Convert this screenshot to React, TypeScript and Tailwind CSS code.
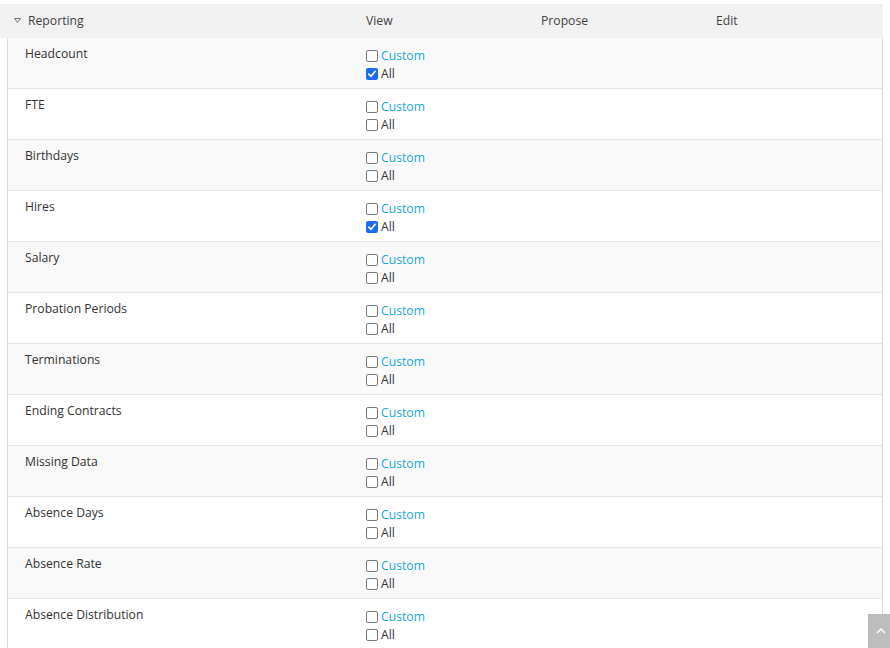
import React from "react";

const rows: { name: string; all: boolean }[] = [
  { name: "Headcount", all: true },
  { name: "FTE", all: false },
  { name: "Birthdays", all: false },
  { name: "Hires", all: true },
  { name: "Salary", all: false },
  { name: "Probation Periods", all: false },
  { name: "Terminations", all: false },
  { name: "Ending Contracts", all: false },
  { name: "Missing Data", all: false },
  { name: "Absence Days", all: false },
  { name: "Absence Rate", all: false },
  { name: "Absence Distribution", all: false },
];

function Box({ checked }: { checked: boolean }) {
  if (checked) {
    return (
      <span className="inline-flex w-[12px] h-[12px] rounded-[2px] bg-[#1a6df0] items-center justify-center mr-[3px] shrink-0">
        <svg viewBox="0 0 12 12" className="w-[10px] h-[10px]">
          <path d="M2.2 6.2 L4.8 8.8 L9.8 2.8" fill="none" stroke="white" strokeWidth="2" strokeLinecap="round" strokeLinejoin="round" />
        </svg>
      </span>
    );
  }
  return (
    <span className="inline-block w-[12px] h-[12px] rounded-[2px] border border-[#7a7a7a] bg-white mr-[3px] shrink-0" />
  );
}

export default function App() {
  return (
    <div
      className="relative w-[890px] h-[648px] overflow-hidden bg-white text-[12.2px] text-[#333]"
      style={{ fontFamily: '"Open Sans", "Noto Sans", sans-serif' }}
    >
      <div className="mt-[4px] w-[883px]">
        {/* header */}
        <div className="flex h-[34px] items-center bg-[#f1f1f1] text-[#444]">
          <div className="w-[366px] flex items-center pl-[14px]">
            <svg viewBox="0 0 8 6" className="w-[7px] h-[5px] mr-[7px]">
              <path d="M0.6 0.6 L7.4 0.6 L4 5.4 Z" fill="none" stroke="#555" strokeWidth="1" strokeLinejoin="round" />
            </svg>
            <span>Reporting</span>
          </div>
          <div className="w-[175px]">View</div>
          <div className="w-[175px]">Propose</div>
          <div className="flex-1">Edit</div>
        </div>

        {/* body */}
        <div className="ml-[7px] border-x border-[#dcdcdc]">
          {rows.map((r, i) => (
            <div
              key={r.name}
              className={`flex h-[51px] border-b border-[#e6e6e6] ${i % 2 === 0 ? "bg-[#f9f9f9]" : "bg-white"}`}
            >
              <div className="w-[358px] pl-[17px] pt-[7px] leading-[18px]">{r.name}</div>
              <div className="w-[175px] pt-[9px] leading-[18px]">
                <div className="flex items-center">
                  <Box checked={false} />
                  <span className="text-[#1ba8d5]">Custom</span>
                </div>
                <div className="flex items-center">
                  <Box checked={r.all} />
                  <span>All</span>
                </div>
              </div>
              <div className="w-[175px]" />
              <div className="flex-1" />
            </div>
          ))}
        </div>
      </div>

      {/* back to top */}
      <div className="absolute right-0 bottom-0 w-[22px] h-[34px] bg-[#bdbdbd] flex items-center justify-center">
        <svg viewBox="0 0 10 6" className="w-[10px] h-[6px] ml-[4px]">
          <path d="M1 5 L5 1 L9 5" fill="none" stroke="white" strokeWidth="1.6" />
        </svg>
      </div>
    </div>
  );
}
